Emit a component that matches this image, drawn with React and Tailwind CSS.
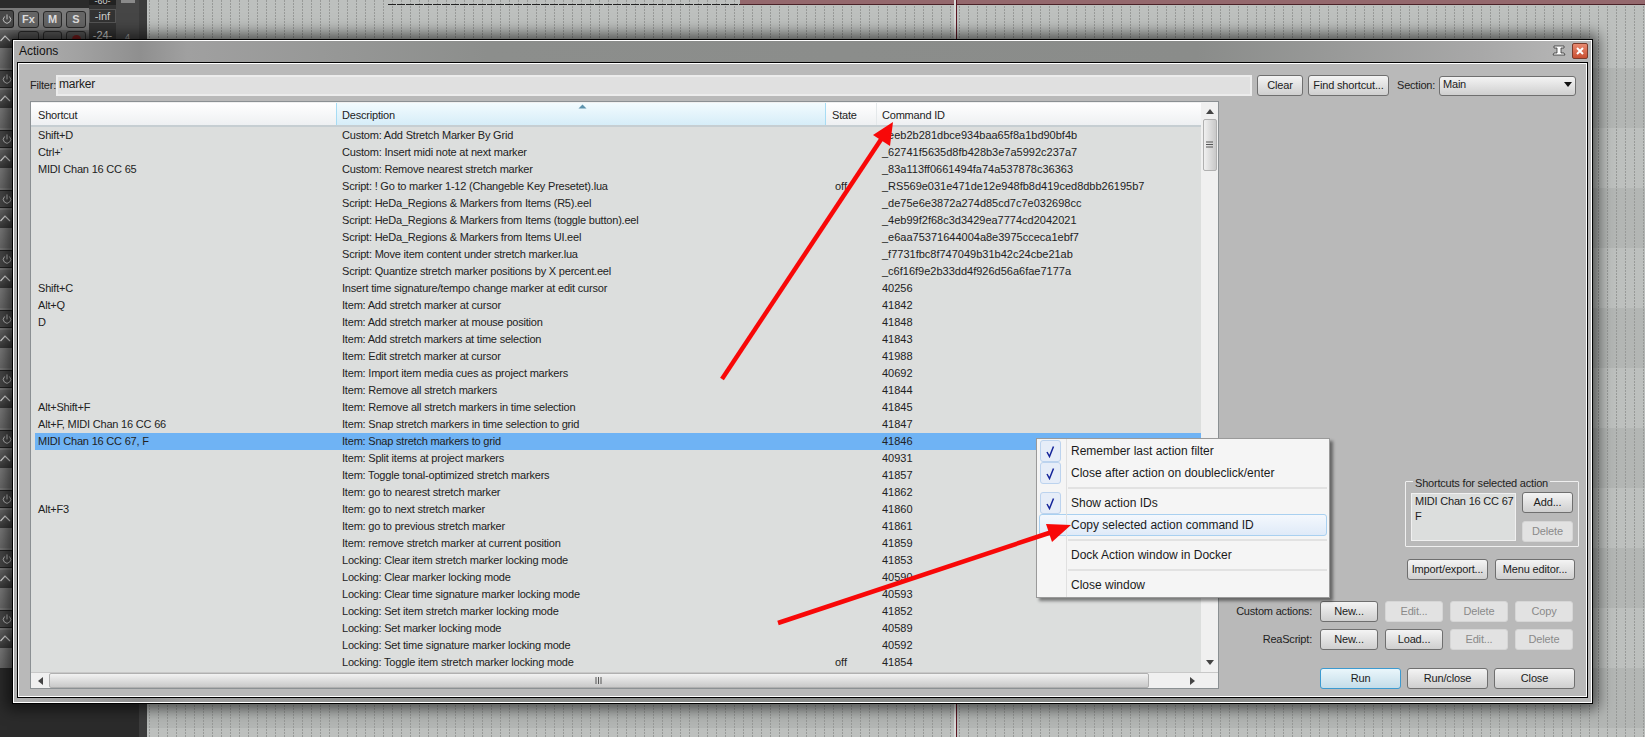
import React from "react";
import { Power } from "lucide-react";

const rows = [
  ["Shift+D", "Custom: Add Stretch Marker By Grid", "", "_eeb2b281dbce934baa65f8a1bd90bf4b"],
  ["Ctrl+'", "Custom: Insert midi note at next marker", "", "_62741f5635d8fb428b3e7a5992c237a7"],
  ["MIDI Chan 16 CC 65", "Custom: Remove nearest stretch marker", "", "_83a113ff0661494fa74a537878c36363"],
  ["", "Script: ! Go to marker 1-12 (Changeble Key Presetet).lua", "off", "_RS569e031e471de12e948fb8d419ced8dbb26195b7"],
  ["", "Script: HeDa_Regions & Markers from Items (R5).eel", "", "_de75e6e3872a274d85cd7c7e032698cc"],
  ["", "Script: HeDa_Regions & Markers from Items (toggle button).eel", "", "_4eb99f2f68c3d3429ea7774cd2042021"],
  ["", "Script: HeDa_Regions & Markers from Items UI.eel", "", "_e6aa75371644004a8e3975cceca1ebf7"],
  ["", "Script: Move item content under stretch marker.lua", "", "_f7731fbc8f747049b31b42c24cbe21ab"],
  ["", "Script: Quantize stretch marker positions by X percent.eel", "", "_c6f16f9e2b33dd4f926d56a6fae7177a"],
  ["Shift+C", "Insert time signature/tempo change marker at edit cursor", "", "40256"],
  ["Alt+Q", "Item: Add stretch marker at cursor", "", "41842"],
  ["D", "Item: Add stretch marker at mouse position", "", "41848"],
  ["", "Item: Add stretch markers at time selection", "", "41843"],
  ["", "Item: Edit stretch marker at cursor", "", "41988"],
  ["", "Item: Import item media cues as project markers", "", "40692"],
  ["", "Item: Remove all stretch markers", "", "41844"],
  ["Alt+Shift+F", "Item: Remove all stretch markers in time selection", "", "41845"],
  ["Alt+F, MIDI Chan 16 CC 66", "Item: Snap stretch markers in time selection to grid", "", "41847"],
  ["MIDI Chan 16 CC 67, F", "Item: Snap stretch markers to grid", "", "41846"],
  ["", "Item: Split items at project markers", "", "40931"],
  ["", "Item: Toggle tonal-optimized stretch markers", "", "41857"],
  ["", "Item: go to nearest stretch marker", "", "41862"],
  ["Alt+F3", "Item: go to next stretch marker", "", "41860"],
  ["", "Item: go to previous stretch marker", "", "41861"],
  ["", "Item: remove stretch marker at current position", "", "41859"],
  ["", "Locking: Clear item stretch marker locking mode", "", "41853"],
  ["", "Locking: Clear marker locking mode", "", "40590"],
  ["", "Locking: Clear time signature marker locking mode", "", "40593"],
  ["", "Locking: Set item stretch marker locking mode", "", "41852"],
  ["", "Locking: Set marker locking mode", "", "40589"],
  ["", "Locking: Set time signature marker locking mode", "", "40592"],
  ["", "Locking: Toggle item stretch marker locking mode", "off", "41854"],
];

const bands = [68, 60, 60, 60, 60, 60, 60, 60, 60, 60, 60, 60, 9];

function Btn({ w, children, disabled, primary }) {
  const base = "flex h-[21px] shrink-0 items-center justify-center whitespace-nowrap rounded-[3px] border pb-[1px] text-[11px] tracking-[-0.15px] ";
  const look = disabled
    ? "border-[#d6d6d6] bg-[#e2e2e2] text-[#8a8a8a]"
    : primary
      ? "border-[#3c9ad0] bg-gradient-to-b from-[#eaf6fb] to-[#c4dde9] text-[#1c1c1c]"
      : "border-[#6f6f6f] bg-gradient-to-b from-[#f4f4f4] to-[#cfcfcf] text-[#1c1c1c]";
  return (
    <div className={base + look} style={{ width: w }}>
      {children}
    </div>
  );
}

function Strip({ first }) {
  const cell = "flex h-[17px] items-center justify-center rounded-[3px] border border-[#2a2a2a] bg-[#666] text-[11px] font-bold tracking-normal text-[#ddd] ";
  const cell2 = "h-[17px] rounded-[3px] border border-[#2a2a2a] bg-[#555] ";
  return (
    <div className="relative flex h-[60px] shrink-0 flex-col bg-[#7a7a7a]">
      <div className="flex h-[22px] items-center gap-[4px] pl-0">
        <div className="flex h-[18px] w-[14px] items-center justify-center rounded-r-[3px] border border-l-0 border-[#222] bg-[#484848]">
          <Power size={10} color="#d8d8d8" strokeWidth={2} />
        </div>
        {first && (
          <>
            <div className={cell + "w-[21px]"}>Fx</div>
            <div className={cell + "w-[19px]"}>M</div>
            <div className={cell + "w-[20px]"}>S</div>
          </>
        )}
      </div>
      <div className="flex h-[18px] items-center gap-[4px] bg-gradient-to-b from-[#6a6a6a] to-[#3a3a3a]">
        <svg className="w-[14px] shrink-0" width="14" height="12" viewBox="0 0 14 12">
          <path d="M0.5 8 L5 3 L10 8" fill="none" stroke="#e0e0e0" strokeWidth="1.2" />
        </svg>
        {first && (
          <>
            <div className={cell2 + "w-[21px]"} />
            <div className={cell2 + "w-[19px]"} />
            <div className={cell2 + "flex w-[20px] items-center justify-center"}>
              <div className="h-[9px] w-[9px] rounded-full bg-[#7a1c1c]" />
            </div>
          </>
        )}
      </div>
      <div className="h-[20px] bg-gradient-to-b from-[#7e7e7e] to-[#6c6c6c]" />
    </div>
  );
}

function MenuRow({ checked, active, children }) {
  return (
    <div
      className={
        "mx-[2px] flex h-[22px] items-center rounded-[3px] border text-[12px] tracking-normal text-[#1a1a1a] " +
        (active ? "border-[#a9d0f0] bg-gradient-to-b from-[#f4f8fd] to-[#dfeaf8]" : "border-transparent")
      }
    >
      <div className="flex w-[31px] shrink-0 items-center">
        {checked && (
          <div className="-my-[1px] flex h-[22px] w-[21px] items-center justify-center rounded-[3px] border border-[#bcd3ee] bg-[#e6edf8]">
            <svg width="11" height="13" viewBox="0 0 11 13">
              <path d="M2 7 L4.5 11.5 L8.5 1.5" fill="none" stroke="#15259a" strokeWidth="1.5" />
            </svg>
          </div>
        )}
      </div>
      <span>{children}</span>
    </div>
  );
}

function MenuSep() {
  return (
    <div className="flex h-[8px] items-center pl-[31px] pr-[2px]">
      <div className="h-[2px] w-full bg-[#e2e2e2]" />
    </div>
  );
}

export default function App() {
  return (
    <div className="relative flex h-[737px] w-[1645px] overflow-hidden bg-[#bcbfbd] font-['Liberation_Sans',sans-serif] text-[11px] tracking-[-0.2px] text-[#1c1c1c]">
      {/* mixer column */}
      <div className="flex h-full w-[139px] shrink-0 flex-col bg-[#2b2b2b] pt-[8px]">
        <div className="relative flex flex-col">
          {Array.from({ length: 11 }).map((_, i) => (
            <Strip key={i} first={i === 0} />
          ))}
          <div className="absolute left-[89px] top-[-8px] flex h-[60px] w-[27px] flex-col items-center bg-[#333] text-[11px] tracking-normal text-[#cfcfcf]">
            <div className="flex h-[5px] w-full items-end justify-center overflow-hidden bg-[#222] text-[9px] leading-[7px]">-60-</div>
            <span className="mt-[4px] h-[14px] w-full border border-[#555] text-center leading-[12px]">-inf</span>
            <span className="mt-[4px]">-24-</span>
          </div>
          <div className="absolute left-[116px] top-[-8px] flex h-[60px] w-[23px] flex-col items-center bg-[#464646] text-[9px] text-[#aaa]">
            <div className="h-[3px] w-[14px] bg-[#8a8a8a]" />
            <span className="mt-[28px]">4</span>
          </div>
        </div>
      </div>
      <div className="h-full w-[8px] shrink-0 bg-[#3c3c3c]" />

      {/* arrange view */}
      <div className="flex h-full flex-1 flex-col">
        {bands.map((h, i) => (
          <div key={i} className={i % 2 === 0 ? "shrink-0 bg-[#bdc0be]" : "shrink-0 bg-[#b3b6b4]"} style={{ height: h }} />
        ))}
      </div>

      {/* grid + timeline overlay */}
      <svg className="absolute left-[147px] top-0" width="1498" height="737">
        <defs>
          <pattern id="grid" x="2" y="0" width="9" height="3" patternUnits="userSpaceOnUse">
            <rect x="0" y="0" width="1" height="2" fill="#989a98" />
          </pattern>
        </defs>
        <rect width="1498" height="737" fill="url(#grid)" />
        <line x1="241" y1="4.5" x2="1498" y2="4.5" stroke="#222" strokeWidth="1" strokeDasharray="8 1" />
        <rect x="593" y="0" width="905" height="5" fill="#94686d" />
        <rect x="593" y="4" width="905" height="1" fill="#4a2228" />
        <rect x="807" y="0" width="2" height="737" fill="#d8dad8" />
        <rect x="809" y="0" width="1" height="737" fill="#5a1420" />
      </svg>

      {/* Actions window */}
      <div className="absolute left-[12px] top-[39px] flex h-[665px] w-[1581px] flex-col border border-black shadow-[0_0_14px_5px_rgba(0,0,0,0.6)]">
        <div className="flex h-full flex-col border border-white bg-[linear-gradient(90deg,#b0b0b0_0%,#a2a2a2_4%,#8f8f8f_8%,#a0a0a0_11%,#8c8e8c_30%,#8a8c8a_75%,#a8a8a8_93%,#b8b8b8_100%)]">
          <div className="flex h-[21px] shrink-0 items-center pb-[1px] pl-[5px] text-[12px] tracking-normal text-[#111]">
            <span>Actions</span>
            <div className="ml-auto mr-[3px] flex items-center gap-[6px]">
              <svg width="14" height="12" viewBox="0 0 14 12">
                <path d="M2 1 H12 V3 H9 V8 H12 L13 10 H1 L2 8 H5 V3 H2 Z" fill="#fff" stroke="#333" strokeWidth="0.8" />
              </svg>
              <div className="flex h-[16px] w-[16px] items-center justify-center rounded-[2px] border border-[#7a3a2a] bg-gradient-to-b from-[#e88a70] to-[#c84e30]">
                <svg width="8" height="8" viewBox="0 0 8 8">
                  <path d="M1 1 L7 7 M7 1 L1 7" stroke="#fff" strokeWidth="2" />
                </svg>
              </div>
            </div>
          </div>
          <div className="mx-[3px] mb-[4px] flex min-h-0 flex-1 flex-col border-t border-x border-b border-black">
            <div className="flex h-full flex-col border border-white bg-[#b9b9b9] pl-[11px] pt-[11px]">
              {/* filter row */}
              <div className="flex h-[21px] shrink-0 items-center">
                <span className="w-[26px] shrink-0 text-[#222]">Filter:</span>
                <div className="flex h-[21px] w-[1196px] shrink-0 items-center border-2 border-[#ececec] bg-[#e0e0e0] pb-[3px] pl-[1px] text-[12px]">marker</div>
                <div className="ml-[5px]"><Btn w={46}>Clear</Btn></div>
                <div className="ml-[5px]"><Btn w={81}>Find shortcut...</Btn></div>
                <span className="ml-[8px] w-[42px] shrink-0 text-[#222]">Section:</span>
                <div className="flex h-[20px] w-[137px] shrink-0 items-center justify-between rounded-[3px] border border-[#6f6f6f] bg-gradient-to-b from-[#f4f4f4] to-[#cfcfcf] pb-[2px] pl-[3px] pr-[3px]">
                  <span>Main</span>
                  <svg width="8" height="5" viewBox="0 0 8 5"><path d="M0 0 H8 L4 5 Z" fill="#111" /></svg>
                </div>
              </div>

              {/* main row */}
              <div className="mt-[5px] flex min-h-0 flex-1 pb-[7px]">
                {/* list */}
                <div className="flex h-[588px] w-[1189px] shrink-0 flex-col border border-[#8b9093] bg-[#f0f0f0]">
                  <div className="flex min-h-0 flex-1">
                    <div className="flex min-w-0 flex-1 flex-col">
                      <div className="mt-[1px] flex h-[24px] shrink-0 items-center border-b-2 border-[#c6ced2] bg-gradient-to-b from-white to-[#eef0f2]">
                        <div className="h-full w-[305px] shrink-0 pl-[7px] leading-[24px]">Shortcut</div>
                        <div className="relative h-full w-[490px] shrink-0 border-x border-[#a7dcf4] bg-gradient-to-b from-[#f2fbfe] to-[#d6edf8] pl-[5px] leading-[24px]">
                          Description
                          <svg className="absolute left-[241px] top-[1px]" width="9" height="5" viewBox="0 0 9 5">
                            <path d="M0.5 4.5 L4.5 0.5 L8.5 4.5 Z" fill="#5d93ad" />
                          </svg>
                        </div>
                        <div className="h-full w-[50px] shrink-0 pl-[6px] leading-[24px]">State</div>
                        <div className="h-full flex-1 border-l border-[#e4e8ea] pl-[5px] leading-[24px]">Command ID</div>
                      </div>
                      <div className="min-h-0 flex-1 overflow-hidden bg-[#dcdedd] pl-[4px]">
                        {rows.map((r, i) => (
                          <div key={i} className={"flex h-[17px] items-center whitespace-nowrap text-[#222] " + (i === 18 ? "bg-[#6fb3f4]" : "")}>
                            <div className="w-[301px] shrink-0 pl-[3px]">{r[0]}</div>
                            <div className="w-[490px] shrink-0 pl-[6px]">{r[1]}</div>
                            <div className="w-[50px] shrink-0 pl-[9px] tracking-normal">{r[2]}</div>
                            <div className="flex-1 pl-[6px] tracking-normal">{r[3]}</div>
                          </div>
                        ))}
                      </div>
                    </div>
                    {/* v scrollbar */}
                    <div className="flex w-[17px] shrink-0 flex-col items-center bg-[#f0f0f0]">
                      <svg className="mt-[7px]" width="8" height="5" viewBox="0 0 8 5"><path d="M0 5 L4 0 L8 5 Z" fill="#444" /></svg>
                      <div className="mt-[5px] flex h-[52px] w-[14px] items-center justify-center rounded-[2px] border border-[#b0b0b0] bg-gradient-to-r from-[#f0f0f0] to-[#c8c8c8]">
                        <svg width="7" height="8" viewBox="0 0 7 8"><path d="M0 1 H7 M0 3.5 H7 M0 6 H7" stroke="#555" strokeWidth="1" /></svg>
                      </div>
                      <svg className="mb-[7px] mt-auto" width="8" height="5" viewBox="0 0 8 5"><path d="M0 0 H8 L4 5 Z" fill="#444" /></svg>
                    </div>
                  </div>
                  {/* h scrollbar */}
                  <div className="flex h-[16px] shrink-0 items-center border-t border-[#c8c8c8] bg-[#f0f0f0]">
                    <svg className="ml-[7px]" width="5" height="8" viewBox="0 0 5 8"><path d="M5 0 V8 L0 4 Z" fill="#444" /></svg>
                    <div className="ml-[6px] flex h-[15px] w-[1100px] items-center justify-center rounded-[2px] border border-[#b0b0b0] bg-gradient-to-b from-[#f2f2f2] to-[#c9c9c9]">
                      <svg width="8" height="7" viewBox="0 0 8 7"><path d="M1 0 V7 M3.5 0 V7 M6 0 V7" stroke="#555" strokeWidth="1" /></svg>
                    </div>
                    <svg className="ml-[41px]" width="5" height="8" viewBox="0 0 5 8"><path d="M0 0 V8 L5 4 Z" fill="#444" /></svg>
                  </div>
                </div>

                {/* right panel */}
                <div className="flex min-w-0 flex-1 flex-col items-end justify-end pr-[11px]">
                  <div className="relative -mr-[4px] mb-[12px] flex h-[66px] w-[174px] gap-[6px] rounded-[1px] border border-[#efefef] pl-[5px] pt-[11px]">
                    <span className="absolute left-[7px] top-[-7px] whitespace-nowrap bg-[#b9b9b9] px-[2px] text-[#222]">Shortcuts for selected action</span>
                    <div className="h-[48px] w-[105px] shrink-0 border border-[#f0f0f0] bg-[#dcdedd] pl-[3px] leading-[15px]">
                      MIDI Chan 16 CC 67
                      <br />F
                    </div>
                    <div className="-mt-[1px] flex flex-col gap-[8px]">
                      <Btn w={51}>Add...</Btn>
                      <Btn w={51} disabled>Delete</Btn>
                    </div>
                  </div>
                  <div className="mb-[21px] flex gap-[7px]">
                    <Btn w={81}>Import/export...</Btn>
                    <Btn w={80}>Menu editor...</Btn>
                  </div>
                  <div className="mb-[7px] mr-[2px] flex items-center gap-[7px]">
                    <span className="mr-[1px] text-[#222]">Custom actions:</span>
                    <Btn w={58}>New...</Btn>
                    <Btn w={58} disabled>Edit...</Btn>
                    <Btn w={58} disabled>Delete</Btn>
                    <Btn w={58} disabled>Copy</Btn>
                  </div>
                  <div className="mb-[18px] mr-[2px] flex items-center gap-[7px]">
                    <span className="mr-[1px] text-[#222]">ReaScript:</span>
                    <Btn w={58}>New...</Btn>
                    <Btn w={58}>Load...</Btn>
                    <Btn w={58} disabled>Edit...</Btn>
                    <Btn w={58} disabled>Delete</Btn>
                  </div>
                  <div className="flex gap-[6px]">
                    <Btn w={81} primary>Run</Btn>
                    <Btn w={81}>Run/close</Btn>
                    <Btn w={81}>Close</Btn>
                  </div>
                </div>
              </div>
            </div>
          </div>
        </div>
      </div>

      {/* context menu */}
      <div className="absolute left-[1036px] top-[438px] flex h-[160px] w-[294px] flex-col border border-[#9a9a9a] bg-[#f5f5f5] py-[1px] shadow-[3px_3px_3px_rgba(0,0,0,0.45)]">
        <div className="absolute bottom-0 left-[29px] top-0 w-[1px] bg-[#e0e0e0]" />
        <MenuRow checked>Remember last action filter</MenuRow>
        <MenuRow checked>Close after action on doubleclick/enter</MenuRow>
        <MenuSep />
        <MenuRow checked>Show action IDs</MenuRow>
        <MenuRow active>Copy selected action command ID</MenuRow>
        <MenuSep />
        <MenuRow>Dock Action window in Docker</MenuRow>
        <MenuSep />
        <MenuRow>Close window</MenuRow>
      </div>

      {/* annotation arrows */}
      <svg className="pointer-events-none absolute left-0 top-0" width="1645" height="737">
        <line x1="722" y1="379" x2="882" y2="138" stroke="#f80808" strokeWidth="4.5" />
        <path d="M893 122 L873 135 L890 146 Z" fill="#f80808" />
        <line x1="778" y1="623" x2="1052" y2="532" stroke="#f80808" strokeWidth="4.5" />
        <path d="M1071 525 L1046 524 L1052 542 Z" fill="#f80808" />
      </svg>
    </div>
  );
}
